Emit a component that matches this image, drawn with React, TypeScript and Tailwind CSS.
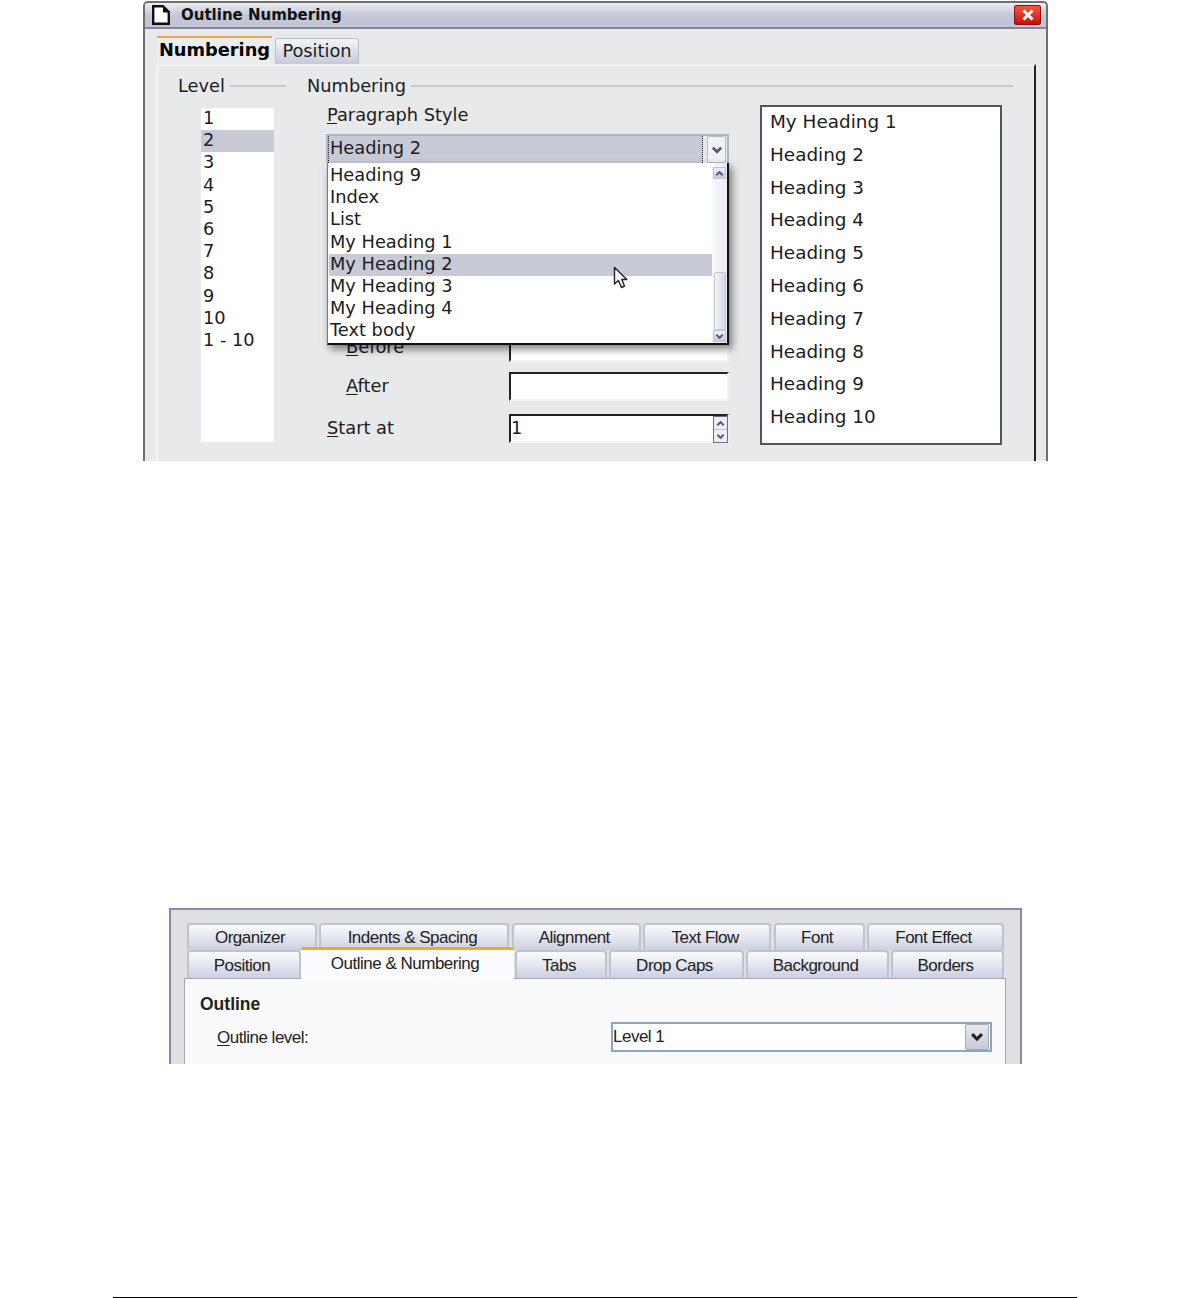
import React from 'react';

const dejavu = { fontFamily: '"DejaVu Sans", sans-serif' };
const tahoma = { fontFamily: '"Liberation Sans", sans-serif' };

const levels = ['1', '2', '3', '4', '5', '6', '7', '8', '9', '10', '1 - 10'];
const popupItems = ['Heading 9', 'Index', 'List', 'My Heading 1', 'My Heading 2', 'My Heading 3', 'My Heading 4', 'Text body'];
const previewItems = ['My Heading 1', 'Heading 2', 'Heading 3', 'Heading 4', 'Heading 5', 'Heading 6', 'Heading 7', 'Heading 8', 'Heading 9', 'Heading 10'];

const topTabs = [
  { label: 'Organizer', w: 'w-[130px]' },
  { label: 'Indents & Spacing', w: 'w-[190px]' },
  { label: 'Alignment', w: 'w-[129px]' },
  { label: 'Text Flow', w: 'w-[128px]' },
  { label: 'Font', w: 'w-[91px]' },
  { label: 'Font Effect', w: 'w-[137px]' },
];

const Chevron: React.FC<{ up?: boolean; color?: string; size?: number }> = ({ up, color = '#4a5a85', size = 10 }) => (
  <svg width={size} height={size} viewBox="0 0 10 10" className={up ? 'rotate-180' : ''}>
    <path d="M1.5 3 L5 6.5 L8.5 3" fill="none" stroke={color} strokeWidth="2.2" />
  </svg>
);

const ScrollButton: React.FC<{ up?: boolean }> = ({ up }) => (
  <div className="w-[13px] h-[12px] flex items-center justify-center bg-gradient-to-b from-[#eef0f6] to-[#c6cad8] border border-[#c0c4d0]">
    <Chevron up={up} size={9} />
  </div>
);

const Label: React.FC<{ mnemonic: string; rest: string }> = ({ mnemonic, rest }) => (
  <span>
    <span className="underline underline-offset-2">{mnemonic}</span>
    {rest}
  </span>
);

const TextField: React.FC<{ value?: string }> = ({ value }) => (
  <div className="w-[220px] h-[29px] bg-white border-t-2 border-l-2 border-t-[#222] border-l-[#222] border-r-2 border-b-2 border-r-[#f2f3f5] border-b-[#f2f3f5] leading-[23px]">
    {value}
  </div>
);

const OutlineNumberingDialog = () => (
  <div style={dejavu} className="ml-[143px] w-[905px] h-[460px] flex flex-col overflow-hidden rounded-t-[5px] border-t-2 border-x-2 border-[#6e6e74] bg-[#e8e9eb] text-[17.8px] text-[#1c1c1c]">
    <div className="h-[26px] shrink-0 flex items-center justify-between pl-[7px] pr-[5px] bg-gradient-to-b from-[#eceef2] via-[#c5c8d8] to-[#c1c4d5] border-b-2 border-[#83869a]">
      <div className="flex items-center">
        <svg width="18" height="20" viewBox="0 0 18 20">
          <path d="M1.2 1.2 H11 L16.8 7 V18.8 H1.2 Z" fill="#fff" stroke="#111" strokeWidth="2.4" />
          <path d="M11 1 V7.5 H17 Z" fill="#111" />
        </svg>
        <span className="ml-[11px] pt-px font-bold text-[15px] text-[#111]">Outline Numbering</span>
      </div>
      <div className="w-[27px] h-[20px] flex items-center justify-center rounded-[2px] border border-[#8c1010] bg-gradient-to-b from-[#f4543c] to-[#c80808]">
        <svg width="12" height="12" viewBox="0 0 12 12">
          <path d="M1.5 1.5 L10.5 10.5 M10.5 1.5 L1.5 10.5" stroke="#fff" strokeWidth="3" />
        </svg>
      </div>
    </div>

    <div className="flex items-end h-[35px] shrink-0 pl-[12px]">
      <div className="w-[115px] h-[28px] border-t-2 border-[#f0a63c] bg-[#ecedef] font-bold text-black leading-[23px] text-center">Numbering</div>
      <div className="ml-[3px] w-[84px] h-[26px] rounded-t-[3px] border border-b-0 border-[#b4c0c8] bg-gradient-to-b from-[#f4f5f8] to-[#c6c9da] leading-[24px] text-center">Position</div>
    </div>

    <div className="flex-1 ml-[11px] mr-[10px] flex border-t-2 border-l-2 border-[#f3f4f5] border-r-2 border-r-[#222] pl-[20px] pt-[11px]">
      <div className="w-[108px] shrink-0">
        <div className="flex items-center h-[18px]">
          <span>Level</span>
          <div className="flex-1 ml-[5px] h-[2px] bg-[#c8c9cb]" />
        </div>
        <div className="mt-[13px] ml-[23px] w-[73px] h-[334px] bg-white leading-[20px]">
          {levels.map((l) => (
            <div key={l} className={`pl-[2px] h-[22.2px] ${l === '2' ? 'bg-[#c8cad8]' : ''}`}>{l}</div>
          ))}
        </div>
      </div>

      <div className="ml-[21px] w-[706px] shrink-0">
        <div className="flex items-center h-[18px]">
          <span>Numbering</span>
          <div className="flex-1 ml-[5px] h-[2px] bg-[#c8c9cb]" />
        </div>
        <div className="mt-[10px] flex pl-[19px]">
          <div className="w-[403px] shrink-0">
            <div className="h-[20px] leading-[20px] pl-px">
              <Label mnemonic="P" rest="aragraph Style" />
            </div>
            <div className="relative mt-[9px] w-[403px] h-[29px]">
              <div className="flex h-full border-t-2 border-x-2 border-[#a8b8c6]">
                <div className="w-[375px] bg-[#c8cad8] border-l border-r border-dotted border-[#222] pl-px leading-[24px] mr-[4px]">Heading 2</div>
                <div className="w-[19px] flex items-center justify-center rounded-[2px] border border-[#b4c0c8] bg-[#f0f1f5]">
                  <Chevron size={12} />
                </div>
              </div>
              <div className="absolute z-10 left-px top-[29px] w-[402px] h-[182px] flex bg-white border-r-2 border-b-2 border-[#111] border-l border-l-[#777] shadow-[3px_4px_8px_rgba(0,0,0,0.5)]">
                <div className="w-[384px] pl-px pt-[2px] leading-[20.5px]">
                  {popupItems.map((item) => (
                    <div key={item} className={`pl-px h-[22.2px] ${item === 'My Heading 2' ? 'bg-[#c8cad8]' : ''}`}>{item}</div>
                  ))}
                </div>
                <div className="flex-1 flex flex-col items-center pt-[4px] pb-[1px] bg-gradient-to-r from-[#f7f8fb] to-[#e9ebf3]">
                  <ScrollButton up />
                  <div className="mt-[93px] w-[12px] h-[58px] rounded-[2px] border border-[#c4c8d2] bg-gradient-to-r from-[#f4f5f9] to-[#d3d6e2]" />
                  <div className="mt-auto"><ScrollButton /></div>
                </div>
                <svg className="absolute left-[285px] top-[103px]" width="16" height="24" viewBox="0 0 16 24">
                  <path d="M1.5 1.5 V18 L5.5 14.5 L8.5 21.5 L11.5 20 L8.8 13.5 L13.8 13.5 Z" fill="#fff" stroke="#222" strokeWidth="1.4" strokeLinejoin="round" />
                </svg>
              </div>
            </div>

            <div className="mt-[170px] flex items-center justify-between">
              <div className="pl-[20px]"><Label mnemonic="B" rest="efore" /></div>
              <TextField />
            </div>
            <div className="mt-[10px] flex items-center justify-between">
              <div className="pl-[20px] pb-px"><Label mnemonic="A" rest="fter" /></div>
              <TextField />
            </div>
            <div className="mt-[13px] flex items-center justify-between">
              <div className="pl-px pb-px"><Label mnemonic="S" rest="tart at" /></div>
              <div className="relative">
                <TextField value="1" />
                <div className="absolute right-[1px] top-[2px] w-[15px] h-[27px] flex flex-col border border-[#6c7080] bg-[#eceef3]">
                  <div className="flex-1 flex items-center justify-center border-b border-[#c0c4d0]"><Chevron up size={9} /></div>
                  <div className="flex-1 flex items-center justify-center"><Chevron size={9} /></div>
                </div>
              </div>
            </div>
          </div>

          <div className="ml-[31px] w-[242px] h-[340px] bg-white border-2 border-[#555] pl-[8px] text-[18.4px]">
            {previewItems.map((item) => (
              <div key={item} className="h-[32.8px] leading-[29px]">{item}</div>
            ))}
          </div>
        </div>
      </div>
    </div>
  </div>
);

const BackTab: React.FC<{ label: string; w: string; ml?: string; lead?: string }> = ({ label, w, ml = '', lead = 'leading-[25px]' }) => (
  <div className={`${w} ${ml} ${lead} shrink-0 h-full text-center pr-[4px] rounded-t-[4px] border-2 border-b-0 border-[#b9c6cc] bg-gradient-to-b from-[#fbfbfd] to-[#ccd0e2]`}>
    {label}
  </div>
);

const ParagraphStyleDialog = () => (
  <div style={tahoma} className="mt-[447px] ml-[169px] w-[853px] h-[156px] overflow-hidden border-t-2 border-x-2 border-[#8a8aa6] bg-[#e0dfe3] pt-[13px] pl-[16px] text-[17px] tracking-[-0.5px] text-[#222]">
    <div className="flex h-[27px] w-[817px] justify-between">
      {topTabs.map((t) => (
        <BackTab key={t.label} label={t.label} w={t.w} />
      ))}
    </div>
    <div className="relative flex h-[28px] w-[817px]">
      <BackTab label="Position" w="w-[114px]" lead="leading-[27px]" />
      <div className="absolute z-10 left-[114px] -top-[3px] w-[213px] h-[32px] pr-[5px] rounded-t-[3px] border-t-[3px] border-[#f5a623] bg-[#fbfbfd] text-center leading-[27px]">Outline &amp; Numbering</div>
      <BackTab label="Tabs" w="w-[92px]" ml="ml-[214px]" lead="leading-[27px]" />
      <BackTab label="Drop Caps" w="w-[135px]" ml="ml-[2px]" lead="leading-[27px]" />
      <BackTab label="Background" w="w-[143px]" ml="ml-[2px]" lead="leading-[27px]" />
      <BackTab label="Borders" w="w-[113px]" ml="ml-[2px]" lead="leading-[27px]" />
    </div>
    <div className="-ml-[3px] w-[822px] h-[88px] border-t border-x border-[#a0a8b0] bg-[#fafafc] pl-[15px]">
      <div className="pt-[14px] font-bold h-[36px] text-[17.5px] leading-[22px] tracking-normal">Outline</div>
      <div className="flex mt-[7px]">
        <div className="w-[411px] pl-[17px] leading-[31px]"><Label mnemonic="O" rest="utline level:" /></div>
        <div className="w-[381px] h-[30px] flex items-center justify-between bg-white border-2 border-[#8aa6c0] pr-px leading-[26px]">
          <span>Level 1</span>
          <div className="w-[24px] h-[26px] flex items-center justify-center rounded-[2px] border border-[#a8acb8] bg-gradient-to-b from-[#e8e9ee] to-[#c8cad6]">
            <Chevron color="#222" size={14} />
          </div>
        </div>
      </div>
    </div>
  </div>
);

export default function App() {
  return (
    <div className="w-[1190px] h-[1298px] bg-white flex flex-col overflow-hidden pt-px">
      <OutlineNumberingDialog />
      <ParagraphStyleDialog />
      <div className="mt-auto ml-[113px] w-[964px] h-px bg-black" />
    </div>
  );
}
